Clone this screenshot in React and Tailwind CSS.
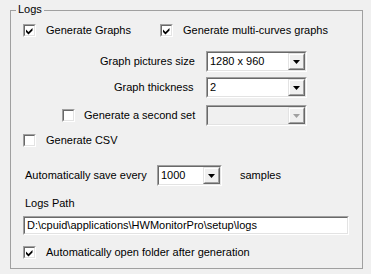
import React from "react";

const font = { fontFamily: '"Liberation Sans", Arial, sans-serif' };

function Sunken({ className = "", inner = "bg-white", children }) {
  return (
    <div
      className={`border border-t-[#a0a0a0] border-l-[#a0a0a0] border-r-white border-b-white ${className}`}
    >
      <div
        className={`flex h-full w-full border border-t-[#696969] border-l-[#696969] border-r-[#e3e3e3] border-b-[#e3e3e3] ${inner}`}
      >
        {children}
      </div>
    </div>
  );
}

function CheckBox({ checked }) {
  return (
    <Sunken className="h-[13px] w-[13px] shrink-0">
      {checked && (
        <svg width="9" height="9" viewBox="0 0 9 9" className="block">
          <polygon points="1,3.5 3.5,6 7.5,2 7.5,4.5 3.5,8.5 1,6" fill="#000" />
        </svg>
      )}
    </Sunken>
  );
}

function Check({ checked, label, gap = "gap-[10px]", className = "" }) {
  return (
    <div className={`flex items-center ${gap} ${className}`}>
      <CheckBox checked={checked} />
      <span className="leading-[13px]">{label}</span>
    </div>
  );
}

function Combo({ value, width, disabled }) {
  return (
    <Sunken
      className={`h-[21px] ${width} shrink-0`}
      inner={disabled ? "bg-[#f0f0f0]" : "bg-white"}
    >
      <span className="flex-1 pl-[2px] leading-[17px]">{value}</span>
      <div className="border border-t-[#e3e3e3] border-l-[#e3e3e3] border-r-[#696969] border-b-[#696969]">
        <div className="flex h-full w-[15px] items-center justify-center border border-t-white border-l-white border-r-[#a0a0a0] border-b-[#a0a0a0] bg-[#f0f0f0]">
          <svg width="7" height="4" viewBox="0 0 7 4" className="block">
            <polygon points="0,0 7,0 3.5,4" fill={disabled ? "#a0a0a0" : "#000"} />
          </svg>
        </div>
      </div>
    </Sunken>
  );
}

export default function App() {
  return (
    <div
      className="h-[274px] w-[371px] bg-[#f0f0f0] pt-[10px] pl-[10px] text-[11px] text-black"
      style={font}
    >
      <div className="relative flex h-[259px] w-[353px] flex-col border border-[#a0a0a0]">
        <span className="absolute -top-[8px] left-[5px] bg-[#f0f0f0] px-[2px] leading-[13px]">
          Logs
        </span>

        <div className="mt-[13px] flex h-[13px] items-center pl-[12px]">
          <Check checked label="Generate Graphs" className="w-[137px]" />
          <Check checked label="Generate multi-curves graphs" />
        </div>

        <div className="mt-[14px] flex h-[21px] items-center pl-[89px]">
          <span className="w-[106px]">Graph pictures size</span>
          <Combo value="1280 x 960" width="w-[101px]" />
        </div>

        <div className="mt-[5px] flex h-[21px] items-center pl-[103px]">
          <span className="w-[92px]">Graph thickness</span>
          <Combo value="2" width="w-[101px]" />
        </div>

        <div className="mt-[7px] flex h-[21px] items-center pl-[51px]">
          <Check label="Generate a second set" gap="gap-[9px]" className="w-[144px]" />
          <Combo value="" width="w-[101px]" disabled />
        </div>

        <div className="mt-[8px] flex h-[13px] items-center pl-[12px]">
          <Check label="Generate CSV" />
        </div>

        <div className="mt-[18px] flex h-[21px] items-center pl-[14px]">
          <span className="w-[132px]">Automatically save every</span>
          <Combo value="1000" width="w-[65px]" />
          <span className="ml-[18px]">samples</span>
        </div>

        <div className="mt-[11px] h-[13px] pl-[14px] leading-[13px]">Logs Path</div>

        <div className="mt-[6px] pl-[12px]">
          <Sunken className="h-[19px] w-[326px]">
            <span className="pl-[2px] leading-[15px]">
              D:\cpuid\applications\HWMonitorPro\setup\logs
            </span>
          </Sunken>
        </div>

        <div className="mt-[11px] flex h-[13px] items-center pl-[12px]">
          <Check checked label="Automatically open folder after generation" />
        </div>
      </div>
    </div>
  );
}
